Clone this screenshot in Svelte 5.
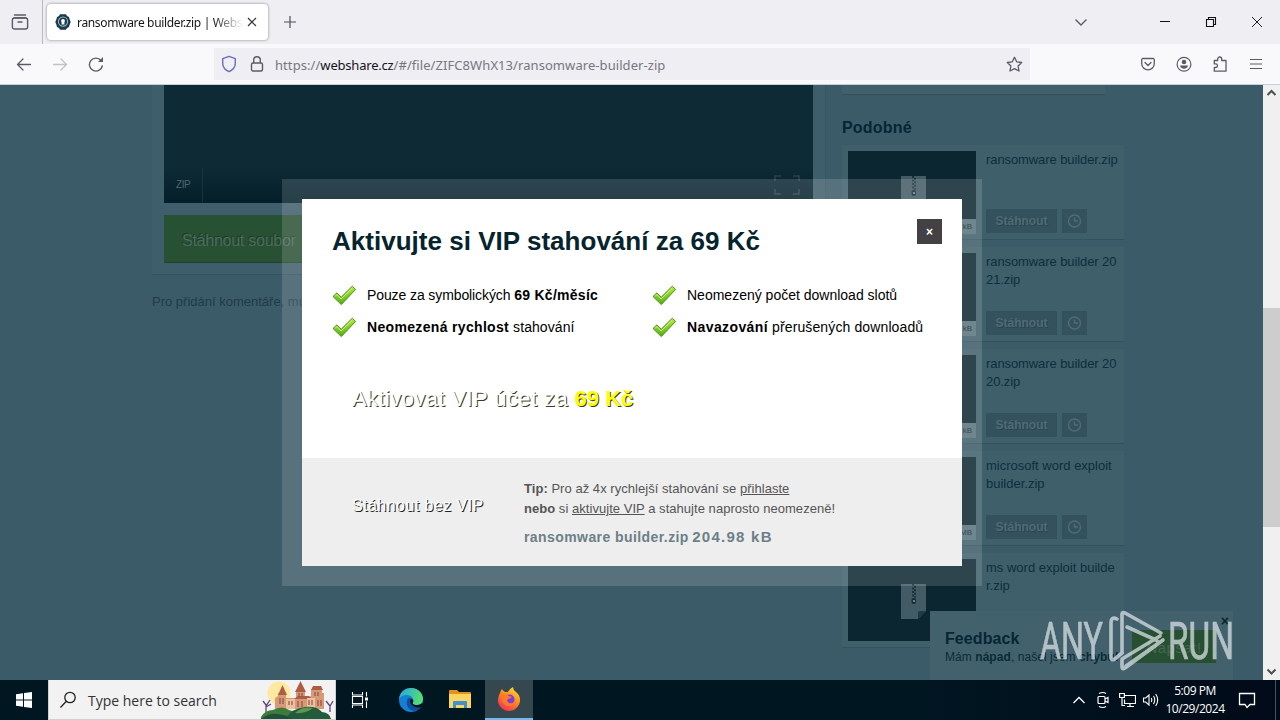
<script>
  const similar = [
    { lines: ['ransomware builder.zip'], size: 'kB', ls: -0.09 },
    { lines: ['ransomware builder 20', '21.zip'], size: 'kB', ls: -0.09 },
    { lines: ['ransomware builder 20', '20.zip'], size: 'kB', ls: -0.09 },
    { lines: ['microsoft word exploit', 'builder.zip'], size: 'MB', ls: 0 },
    { lines: ['ms word exploit builde', 'r.zip'], size: '', ls: 0 }
  ];
</script>

{#snippet check()}
  <svg class="check" width="25" height="22" viewBox="0 0 25 22">
    <defs>
      <linearGradient id="cg" x1="0" y1="0" x2="0" y2="1">
        <stop offset="0" stop-color="#b4ee3c" /><stop offset="1" stop-color="#55ad16" />
      </linearGradient>
    </defs>
    <path d="M1 12.500 L4.800 9 L9.200 13.200 L20.300 2.200 L23.600 5.400 L9.300 20.600 Z" fill="url(#cg)" stroke="#4b8f1c" stroke-width="1" stroke-linejoin="round" />
    <path d="M3 12.300 L5 10.600 L9.200 15 L20.300 4" fill="none" stroke="#d5f77e" stroke-width="1" />
  </svg>
{/snippet}

<div class="screen">
  <header class="tabs">
    <div class="view">
      <svg width="18" height="18" viewBox="0 0 18 18" fill="none" stroke="#5b5b66" stroke-width="1.4">
        <path d="M3.5 2h11" stroke-linecap="round" /><path d="M2.5 4.9h13" /><rect x="1.4" y="5" width="15.2" height="11" rx="2" /><path d="M7 9h4" stroke-linecap="round" />
      </svg>
    </div>
    <div class="tab">
      <svg width="16" height="16" viewBox="0 0 16 16">
        <path d="M5 .3h6l1 1.700L14 3l.5 2 1.200 3-1.200 3-.5 2-2 1-1 1.700H5l-1-1.700-2-1-.5-2L.3 8l1.200-3L2 3l2-1z" fill="#1b3a4c" />
        <circle cx="8" cy="7.600" r="4.600" fill="none" stroke="#9ab7c4" stroke-width="1.100" />
        <circle cx="8" cy="6.800" r="1.900" fill="#fff" /><path d="M6.800 7h2.400l.3 3.500h-3z" fill="#fff" />
      </svg>
      <span class="tabtitle">ransomware builder.zip | Websh</span>
      <svg class="tx" width="10" height="10" viewBox="0 0 10 10" stroke="#33333b" stroke-width="1.2"><path d="M1 1l8 8M9 1l-8 8" /></svg>
    </div>
    <svg class="plus" width="14" height="14" viewBox="0 0 14 14" stroke="#4d4d57" stroke-width="1.2"><path d="M7 1v12M1 7h12" /></svg>
    <div class="wctl">
      <svg width="14" height="14" viewBox="0 0 14 14" fill="none" stroke="#5b5b66" stroke-width="1.4"><path d="M1.5 4.500 7 10l5.500-5.500" /></svg>
      <svg class="min" width="12" height="12" viewBox="0 0 12 12" stroke="#111"><path d="M1 5.500h10" /></svg>
      <svg class="max" width="12" height="12" viewBox="0 0 12 12" fill="none" stroke="#111" stroke-width="1.1"><path d="M1.500 3.500h7v7h-7zM3.500 3.500v-2h7v7h-2" /></svg>
      <svg class="cls" width="12" height="12" viewBox="0 0 12 12" stroke="#222"><path d="M1 1l10 10M11 1 1 11" /></svg>
    </div>
  </header>

  <nav class="toolbar">
    <div class="navs">
      <svg width="16" height="16" viewBox="0 0 16 16" fill="none" stroke="#5b5b66" stroke-width="1.3" stroke-linecap="round" stroke-linejoin="round"><path d="M14.500 8.500h-13M7 3 1.500 8.500 7 14" /></svg>
      <svg width="16" height="16" viewBox="0 0 16 16" fill="none" stroke="#c1c1c8" stroke-width="1.3" stroke-linecap="round" stroke-linejoin="round"><path d="M1.500 8.500h13M9 3 14.500 8.500 9 14" /></svg>
      <svg width="16" height="16" viewBox="0 0 16 16" fill="none" stroke="#5b5b66" stroke-width="1.4" stroke-linecap="round"><path d="M14.300 10A6.500 6.500 0 1 1 13 4.500" /><path d="M15 1v5H10z" fill="#5b5b66" stroke="none" /></svg>
    </div>
    <div class="url">
      <svg width="16" height="18" viewBox="0 0 16 18" fill="none" stroke="#6b6bc0" stroke-width="1.4" stroke-linejoin="round"><path d="M8 1.300 14.300 3.600v4.400c0 4-2.700 7.100-6.300 8.700C4.400 15.100 1.700 12 1.700 8V3.600z" /></svg>
      <svg width="14" height="18" viewBox="0 0 14 18" fill="none" stroke="#5b5b66" stroke-width="1.4"><rect x="1.500" y="8" width="11" height="8" rx="1.500" /><path d="M3.700 8V5a3.300 3.300 0 0 1 6.600 0v3" /></svg>
      <span class="addr">https://<b>webshare.cz</b>/#/file/ZIFC8WhX13/ransomware-builder-zip</span>
      <svg class="star" width="17" height="17" viewBox="0 0 17 17" fill="none" stroke="#5b5b66" stroke-width="1.300" stroke-linejoin="round"><path d="M8.500 1.300l2.200 4.500 5 .7-3.600 3.500.9 5-4.500-2.400L4 15l.9-5L1.300 6.500l5-.7z" /></svg>
    </div>
    <div class="acts">
      <svg width="16" height="16" viewBox="0 0 16 16" fill="none" stroke="#5b5b66" stroke-width="1.3" stroke-linecap="round" stroke-linejoin="round"><path d="M2.500 2.500h11A1.300 1.300 0 0 1 14.300 3.800V7.500A6.300 6.300 0 0 1 1.700 7.500V3.800A1.300 1.300 0 0 1 2.500 2.500zM5 6.500l3 3 3-3" /></svg>
      <svg width="16" height="16" viewBox="0 0 16 16"><circle cx="8" cy="8.300" r="6.900" fill="none" stroke="#5b5b66" stroke-width="1.200" /><circle cx="8" cy="6" r="2.300" fill="#5b5b66" /><path d="M4 9.600h8c0 2-2 3.200-4 3.200s-4-1.200-4-3.200z" fill="#5b5b66" /></svg>
      <svg width="16" height="16" viewBox="0 0 16 16" fill="none" stroke="#5b5b66" stroke-width="1.300" stroke-linejoin="round"><path d="M5.700 4.500V3a2 2 0 0 1 4 0v1.500h4.300v10.700H2.300v-3.700h1.400a1.800 1.800 0 0 0 0-3.600H2.300V4.500z" /></svg>
      <svg width="16" height="16" viewBox="0 0 16 16" stroke="#5b5b66" stroke-width="1.200"><path d="M2 3.500h12M2 8h12M2 12.500h12" /></svg>
    </div>
  </nav>

  <div class="viewport">
    <main class="page">
      <section class="left">
        <div class="filecard">
          <div class="preview">
            <div class="pbar"><span>ZIP</span><svg width="26" height="20" viewBox="0 0 26 20" fill="none" stroke="#2b424b" stroke-width="1.500"><path d="M1 6V1h6M19 1h6v5M25 14v5h-6M7 19H1v-5" /></svg></div>
          </div>
          <div class="dl">Stáhnout soubor</div>
        </div>
        <p class="comment">Pro přidání komentáře, mu</p>
      </section>
      <aside class="right">
        <div class="prev"></div>
        <h3>Podobné</h3>
        {#each similar as s}
          <article class="item">
            <div class="thumb">
              <svg width="25" height="35" viewBox="0 0 25 35"><path d="M0 0h25v27l-8 8H0z" fill="#435b64" /><path d="M25 27l-8 8v-6q0-2 2-2z" fill="#1d3944" /><path d="M12 0v14" stroke="#142e38" stroke-width="1.800" stroke-dasharray="2 1.500" /><path d="M14 1.700v12" stroke="#142e38" stroke-width="1.800" stroke-dasharray="2 1.500" /><rect x="10.500" y="14" width="4.500" height="6" rx="2" fill="#142e38" /><rect x="12" y="16" width="2" height="2" fill="#6d8289" /></svg>
              {#if s.size}<span class="size">{s.size}</span>{/if}
            </div>
            <div class="info">
              <div class="name" style="letter-spacing:{s.ls}px">{#each s.lines as l}<div>{l}</div>{/each}</div>
              <div class="btns">
                <span class="b1">Stáhnout</span>
                <span class="b2"><svg width="15" height="15" viewBox="0 0 15 15" fill="none" stroke="#506b74" stroke-width="1.400"><circle cx="7.500" cy="7" r="6" /><path d="M7.500 3.500V7H11" /></svg></span>
              </div>
            </div>
          </article>
        {/each}
      </aside>
    </main>

    <div class="feedback">
      <h4>Feedback</h4>
      <p>Mám <b>nápad</b>, našel jsem <b>chybu!</b></p>
      <span class="fbtn">Napsat!</span>
      <span class="fx">×</span>
    </div>

    <div class="frame">
      <div class="modal">
        <div class="top">
          <div class="mhead"><h1>Aktivujte si VIP stahování za 69 Kč</h1><span class="mx">×</span></div>
          <div class="feats">
            <div>{@render check()}<span class="f1">Pouze za symbolických <b>69 Kč/měsíc</b></span></div>
            <div>{@render check()}<span class="f2">Neomezený počet download slotů</span></div>
            <div>{@render check()}<span class="f3"><b>Neomezená rychlost</b> stahování</span></div>
            <div>{@render check()}<span class="f4"><b>Navazování</b> přerušených downloadů</span></div>
          </div>
          <div class="cta"><span>Aktivovat VIP účet za <b>69 Kč</b></span></div>
        </div>
        <div class="bottom">
          <div class="novip"><span>Stáhnout bez VIP</span></div>
          <div class="tip">
            <div><span class="t1"><b>Tip:</b> Pro až 4x rychlejší stahování se <u>přihlaste</u></span></div>
            <div><span class="t2"><b>nebo</b> si <u>aktivujte VIP</u> a stahujte naprosto neomezeně!</span></div>
            <div class="fn"><span class="t3">ransomware builder.zip</span> <span class="t4">204.98 kB</span></div>
          </div>
        </div>
      </div>
    </div>

    <div class="scroll">
      <svg width="17" height="17" viewBox="0 0 17 17" fill="none" stroke="#505050" stroke-width="2"><path d="M4.500 10l4-4 4 4" /></svg>
      <div class="thumbbar"></div>
      <svg width="17" height="17" viewBox="0 0 17 17" fill="none" stroke="#505050" stroke-width="2"><path d="M4.500 6.500l4 4 4-4" /></svg>
    </div>

    <svg class="mark" width="200" height="70" viewBox="0 0 200 70">
      <g opacity=".72">
        <g fill="#dfe6e9" stroke="#dfe6e9" stroke-width=".7" font-family="Roboto" font-size="51.500" font-weight="400">
          <text x="5" y="54" textLength="63" lengthAdjust="spacingAndGlyphs">ANY</text>
          <text x="133" y="54" textLength="66" lengthAdjust="spacingAndGlyphs">RUN</text>
        </g>
        <g fill="none" stroke="#dfe6e9" stroke-width="3.600" stroke-linejoin="round" stroke-linecap="round">
          <path d="M82 14q-6-3-6 4v34q0 5 5 1l6-5" />
          <path d="M92 22l29 13q4 2 0 5L91 61" />
          <path d="M87 48V9q0-2 3-1l36 20M128 35 90 63q-3 2-3-1v-8L125 31" />
        </g>
      </g>
    </svg>
  </div>

  <footer class="taskbar">
    <div class="start"><svg width="16" height="16" viewBox="0 0 16 16" fill="#fff"><path d="M0 2.200 7 1.200V7.500H0zM8 1 16 0v7.500H8zM0 8.500h7v6.300l-7-1zM8 8.500h8V16l-8-1z" /></svg></div>
    <div class="search">
      <svg width="18" height="18" viewBox="0 0 18 18" fill="none" stroke="#222" stroke-width="1.300"><circle cx="11" cy="6.500" r="5.200" /><path d="M7.300 10.300 1.500 16.500" /></svg>
      <span>Type here to search</span>
      <svg class="castle" width="74" height="39" viewBox="0 0 74 39">
        <circle cx="18" cy="13" r="11.500" fill="#ffe9a0" />
        <path d="M14 29V18l3-2V13h8v5h10v-7h9v7l6-2V9h11v4h2v16z" fill="#d79a78" />
        <path d="M17 15l4.500-10L26 15zM34 12l5.500-11L45 12zM50 10l2-4h8l2 4zM33 19l4-3h11l3 3z" fill="#b05c44" />
        <path d="M25 19h9v10h-9zM46 18h8v11h-8z" fill="#ecc0a0" />
        <path d="M19 18v6M22 18v6M28 21v4M31 21v4M38 13v4M41 13v4M37 21v6M41 21v6M48 20v5M51 20v5M54 12v4M57 12v4M57 20v6M60 20v6" stroke="#8a4b40" stroke-width="1.100" />
        <path d="M2 21l3 4M9 20l-4 6v6M5 27l5-3M65 21l4 5 3-5M69 26v6" stroke="#5e477d" stroke-width="1.300" fill="none" />
        <path d="M0 37q4-7 12-7 9-5 16 0 9 2 10 9H0z" fill="#3d7a3c" /><path d="M24 39q7-11 20-12 12-1 17 5 8 1 9 7z" fill="#245b3b" /><path d="M34 33q8-7 18-5-7 6-18 5z" fill="#5d9850" />
        <path d="M0 39q8-6 17-5t14 5z" fill="#205039" />
      </svg>
    </div>
    <div class="app"><svg width="18" height="18" viewBox="0 0 18 18" fill="none" stroke="#fff" stroke-width="1.100"><path d="M1.500 1v3h10V1M1.500 17v-3h10v3M1.500 5.500h10v7h-10zM15.500 1v4.500M15.500 10.500V17" /><path d="M14 6.500h3v3h-3z" fill="#fff" stroke="none" /></svg></div>
    <div class="app"><svg width="26" height="26" viewBox="0 0 26 26">
      <defs><linearGradient id="e1" x1="0" y1="0" x2="1" y2=".3"><stop offset="0" stop-color="#20a5e8" /><stop offset="1" stop-color="#55dc72" /></linearGradient></defs>
      <circle cx="13" cy="13" r="12" fill="#157fd3" /><path d="M1 12C2 4 8 1 13 1c8 0 12 6 12 11 0 4-3 6-7 6-3 0-4-1-3-3 1-4-2-7-6-7-4 0-7 2-8 4z" fill="url(#e1)" /><path d="M9.500 12c-3 7 3 14 10 11 2-1 3-2 4-4-3 1.500-7 1.500-9-.5-2-1.500-2.500-4 0-6-1-1.500-4-2-5-.5z" fill="#0d4f9e" /><path d="M13 12c2 0 3 1.500 2 3.300-.6 1.700.4 2.700 3 2.700 2 0 4-.3 5.500-1.500l1.500 0-1 3.500c-3 1-6.500.5-9-1-2.500-1.800-3.800-5-2-7z" fill="#001620" />
    </svg></div>
    <div class="app"><svg width="22" height="20" viewBox="0 0 22 20"><path d="M0 1q0-1 1-1h7l2 2h11q1 0 1 1v3H0z" fill="#e2921f" /><path d="M0 4h22v14H0z" fill="#fcd462" /><path d="M4 18v-6q0-1 1-1h12q1 0 1 1v6h-3v-3H7v3z" fill="#3f90cf" /></svg></div>
    <div class="app active"><svg width="24" height="24" viewBox="0 0 24 24">
      <defs><linearGradient id="ff" x1=".8" y1="0" x2=".2" y2="1"><stop offset="0" stop-color="#ffe035" /><stop offset=".45" stop-color="#ff8a1f" /><stop offset="1" stop-color="#f5285e" /></linearGradient></defs>
      <path d="M3 6q1-3 2-4 1 2 3 3l3 0q1-3 5-5 0 3 3 5 4 3 4 8c0 6-5 11-11 11S1 19 1 13q0-4 2-7z" fill="url(#ff)" /><circle cx="12.500" cy="12.500" r="5" fill="#7a3ee0" /><path d="M5 8q4-2 7 1 2 1 3 0-1 3-4 3-2 2 1 4 4 1 6-2-1 5-6 5c-5 0-8-5-7-11z" fill="#ff7a24" />
    </svg></div>
    <div class="tray">
      <svg width="14" height="10" viewBox="0 0 14 10" fill="none" stroke="#fff" stroke-width="1.300"><path d="M1.500 8 7 2.500 12.500 8" /></svg>
      <svg width="12" height="18" viewBox="0 0 12 18" fill="none" stroke="#fff" stroke-width="1.200"><rect x="1" y="5.500" width="7" height="7" rx="1" /><path d="M8 8l3-1.500v5L8 10M2 2.500q4-2 7 0M2 15.500q4 2 7 0" /></svg>
      <svg width="17" height="16" viewBox="0 0 17 16" fill="none" stroke="#fff" stroke-width="1.200"><path d="M5.500 3.500h11v8h-11v-4M8 14.500h7M11 11.500v3M.6 1.500h4.800v4H.6zM3 5.500v8h3" /></svg>
      <svg width="18" height="16" viewBox="0 0 18 16" fill="none" stroke="#fff" stroke-width="1.100"><path d="M1.500 6v4h2.200L7 13V3L3.700 6zM9.300 6q1 2 0 4M11.500 4q2.500 4 0 8M13.700 2q4 6 0 12" /></svg>
      <div class="clock"><span>5:09 PM</span><span class="date">10/29/2024</span></div>
      <svg class="note" width="18" height="18" viewBox="0 0 18 18" fill="none" stroke="#fff" stroke-width="1.300"><path d="M1.500 2.500h15v11H12L9 16.500 7 13.500H1.500z" /></svg>
      <i></i>
    </div>
  </footer>
</div>

<style>
  :global(body) { margin: 0; overflow: hidden; }
  .screen { width: 1280px; height: 720px; display: flex; flex-direction: column; overflow: hidden; font-family: "Liberation Sans", Arial, sans-serif; white-space: nowrap; }
  svg { display: block; flex: none; }
  h1, h3, h4, p { margin: 0; }
  * { box-sizing: border-box; }

  .tabs { height: 44px; flex: none; background: #eeeef3; display: flex; align-items: center; font-family: "Noto Sans", "Open Sans", sans-serif; }
  .view { width: 43px; height: 44px; border-right: 1px solid #b9b9c0; display: flex; align-items: center; padding-left: 11px; }
  .tab { width: 221px; height: 36px; margin-left: 4px; background: #fff; border-radius: 4px; box-shadow: 0 0 3px rgba(0,0,0,.45); display: flex; align-items: center; padding: 0 11px 0 8px; }
  .tabtitle { margin-left: 6px; width: 166px; overflow: hidden; font-size: 12px; letter-spacing: -.34px; color: #15141a; -webkit-mask-image: linear-gradient(90deg, #000 82%, transparent 100%); mask-image: linear-gradient(90deg, #000 82%, transparent 100%); }
  .tx { margin-left: 4px; }
  .plus { margin-left: 15px; }
  .wctl { margin-left: auto; display: flex; align-items: center; padding-right: 17px; }
  .wctl > svg:first-child { margin-right: 1px; }
  .min { margin-left: 70px; } .max { margin-left: 34px; } .cls { margin-left: 34px; }

  .toolbar { height: 41px; flex: none; background: #f9f9fc; border-bottom: 1px solid #c5d0d4; display: flex; align-items: center; }
  .navs { display: flex; gap: 20px; padding-left: 16px; width: 214px; }
  .url { width: 816px; height: 32px; background: #eeeef3; display: flex; align-items: center; padding: 0 7px; font-family: "Noto Sans", "Open Sans", sans-serif; font-size: 13px; color: #777780; }
  .url svg + svg { margin-left: 13px; }
  .addr { margin-left: 11px; padding-top: 2px; letter-spacing: .07px; }
  .addr b { font-weight: 400; color: #15141a; letter-spacing: -.2px; }
  .star { margin-left: auto; }
  .acts { margin-left: auto; display: flex; gap: 20px; padding-right: 16px; }

  .viewport { position: relative; height: 595px; flex: none; background: #3b5b68; overflow: hidden; }
  .page { display: flex; padding-left: 152px; height: 595px; overflow: hidden; }
  .left { width: 674px; }
  .filecard { height: 190px; padding: 0 12px; background: #3e5e6b; border-bottom: 1px solid #34525e; border-right: 1px solid #385764; }
  .preview { height: 118px; background: #0d2a35; display: flex; align-items: flex-end; }
  .pbar { flex: 1; height: 36px; background: linear-gradient(#0d2a35, #041f2a); display: flex; align-items: center; justify-content: space-between; padding: 0 13px 0 0; font-size: 10px; color: #4f656d; }
  .pbar span { padding: 0 12px; line-height: 34px; letter-spacing: -.4px; border-right: 1px solid #143440; }
  .dl { margin-top: 12px; height: 48px; background: #285134; border-bottom: 1px solid #1f442b; color: #4b6c5b; font-size: 16px; line-height: 51px; padding-left: 18px; text-shadow: -1px -1px #1c3c2b; letter-spacing: -.25px; }
  .comment { margin-top: 19px; font-size: 13px; line-height: 16px; color: #1e3c48; }
  .right { margin-left: 16px; width: 282px; }
  .prev { height: 10px; width: 263px; background: #41606c; border-bottom: 1px solid #34525e; }
  h3 { margin-top: 22px; height: 28px; font-size: 16px; line-height: 21px; color: #052635; letter-spacing: .2px; }
  .item { height: 95px; margin-bottom: 7px; padding: 6px; display: flex; gap: 10px; background: #3f5f6b; border-bottom: 1px solid #34525e; }
  .thumb { width: 128px; height: 82px; flex: none; background: #0b2631; display: flex; justify-content: center; padding: 25px 0 0 2px; position: relative; }
  .size { position: absolute; right: 0; bottom: -1px; height: 15px; background: #58727b; color: #0c2c39; font-size: 8px; line-height: 15px; padding: 0 4px; }
  .info { display: flex; flex-direction: column; justify-content: space-between; width: 137px; }
  .name { font-size: 13px; line-height: 18px; color: #0c2f3d; }
  .btns { display: flex; gap: 5px; height: 24px; }
  .b1 { width: 71px; background: #34525e; color: #506b74; font-size: 12px; font-weight: 700; text-align: center; line-height: 25px; text-shadow: 1px 1px #29444f; }
  .b2 { width: 25px; background: #34525e; display: flex; align-items: center; justify-content: center; }

  .feedback { position: absolute; left: 930px; top: 526px; width: 303px; height: 69px; background: #42616c; padding: 19px 15px; }
  h4 { font-size: 16px; line-height: 18px; color: #052635; letter-spacing: .1px; }
  .feedback p { font-size: 12px; line-height: 19px; letter-spacing: .06px; color: #0a2b39; }
  .fbtn { position: absolute; left: 202px; top: 19px; width: 84px; height: 33px; background: #275033; color: #45674f; font-size: 15px; letter-spacing: .5px; line-height: 35px; text-align: center; }
  .fx { position: absolute; right: 4px; top: 2px; font-size: 14px; font-weight: 700; line-height: 16px; color: #0a2431; }

  .frame { position: absolute; left: 282px; top: 94px; width: 700px; height: 407px; padding: 20px; background: rgba(255,255,255,.145); }
  .modal { height: 367px; background: #fff; }
  .top { height: 259px; padding: 20px 20px 0 30px; }
  .mhead { display: flex; justify-content: space-between; height: 60px; }
  h1 { font-size: 26px; line-height: 44px; color: #05242d; letter-spacing: .02px; }
  .mx { width: 25px; height: 25px; background: #434143; color: #fff; font-weight: 700; font-size: 12px; line-height: 26px; text-align: center; }
  .feats { display: grid; grid-template-columns: 320px 1fr; grid-auto-rows: 32px; font-size: 14px; color: #000; }
  .feats div { display: flex; align-items: center; gap: 10px; }
  .f1 { letter-spacing: -.1px; } .f1 b { letter-spacing: .27px; }
  .f3 b { letter-spacing: .33px; } .f3 { letter-spacing: .08px; }
  .f4 b { letter-spacing: .4px; } .f4 { letter-spacing: .12px; }
  .cta { padding: 40px 20px 0; font-size: 22px; line-height: 32px; color: #fff; text-shadow: 1px 1px #3c3c20; letter-spacing: .41px; }
  .cta b { color: #ff0; letter-spacing: 0; }
  .bottom { height: 108px; background: #eee; display: flex; color: #555; font-size: 13px; }
  .novip { padding: 36px 0 0 50px; width: 222px; font-size: 16px; line-height: 24px; color: #fff; text-shadow: 1px 1px #222; letter-spacing: .45px; }
  .tip { padding-top: 21px; line-height: 20px; letter-spacing: .04px; }
  .fn { margin-top: 8px; font-size: 14px; line-height: 20px; font-weight: 700; color: #6c8086; }
  .t3 { letter-spacing: .42px; }
  .t4 { font-size: 15px; letter-spacing: 1.250px; margin-left: -.5px; }

  .scroll { position: absolute; right: 0; top: 0; width: 17px; height: 595px; background: #f0f0f0; display: flex; flex-direction: column; }
  .thumbbar { height: 219px; margin: 206px 0 auto; background: #cdcdcd; }
  .mark { position: absolute; left: 1035px; top: 520px; }

  .taskbar { height: 40px; flex: none; background: linear-gradient(90deg, #001722 0%, #001722 70%, #010a18 100%); display: flex; font-family: "Open Sans", "Noto Sans", sans-serif; }
  .start { width: 48px; display: flex; align-items: center; justify-content: center; }
  .search { width: 288px; background: #f2f2f2; border: 1px solid #d0d0d0; border-top: 0; display: flex; align-items: center; padding-left: 10px; font-size: 14px; color: #333; overflow: hidden; }
  .search span { margin-left: 11px; padding-top: 2px; }
  .castle { margin-left: auto; }
  .app { width: 48px; display: flex; align-items: center; justify-content: center; }
  .app:nth-child(4) { width: 52px; padding-left: 2px; }
  .app:nth-child(5) { width: 49px; padding-right: 2px; }
  .active { background: #35474f; border-bottom: 2px solid #76b9ed; }
  .tray { margin-left: auto; display: flex; align-items: center; color: #fff; width: 208px; }
  .tray svg { margin-right: 11px; }
  .tray svg:nth-child(2) { margin-right: 10px; }
  .tray svg:nth-child(3) { margin-right: 6px; }
  .tray svg:nth-child(4) { margin-right: 6px; }
  .clock { width: 58px; display: flex; flex-direction: column; align-items: center; font-size: 12px; line-height: 18px; letter-spacing: -.45px; }
  .tray .note { margin-left: 14px; margin-right: 0; }
  .tray i { width: 1px; height: 40px; margin-left: auto; margin-right: 4px; background: #4a5360; }
</style>
